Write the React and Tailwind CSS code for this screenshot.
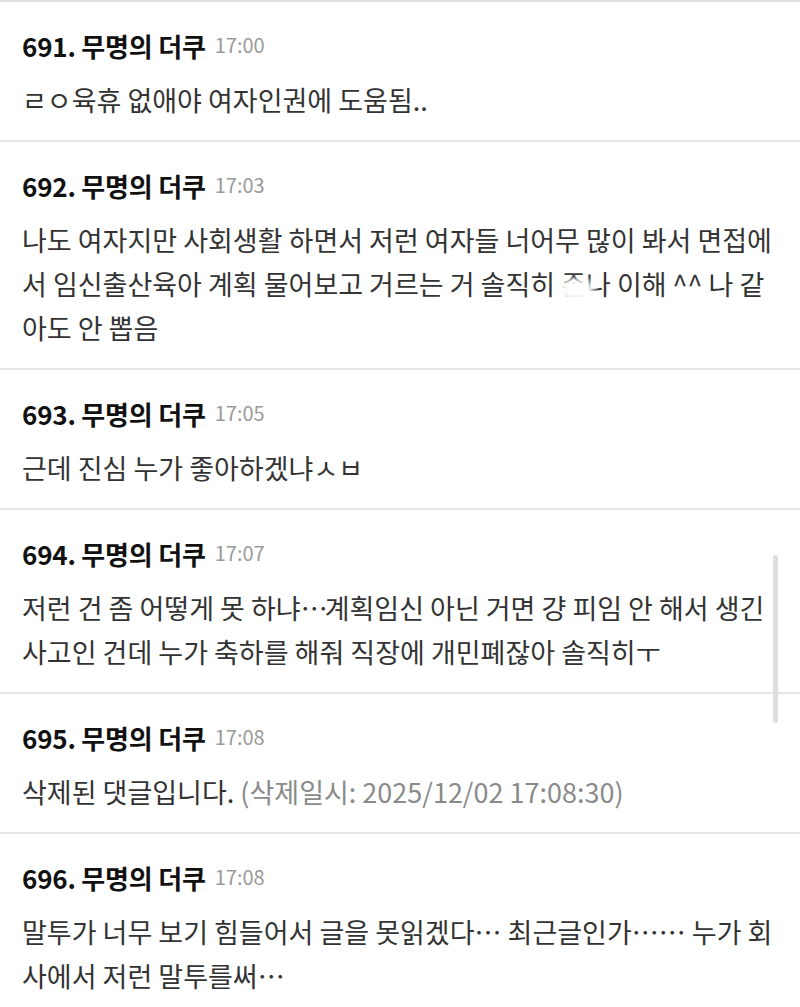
const Censored = ({ children }) => (
  <span className="relative inline-block">
    {children}
    <span className="absolute left-[-2px] top-[17px] h-[22px] w-[35px] rounded-full bg-white blur-[3px]" />
  </span>
)

const comments = [
  { no: 691, time: '17:00', lines: ['ㄹㅇ육휴 없애야 여자인권에 도움됨..'] },
  {
    no: 692,
    time: '17:03',
    lines: [
      '나도 여자지만 사회생활 하면서 저런 여자들 너어무 많이 봐서 면접에',
      <>
        서 임신출산육아 계획 물어보고 거르는 거 솔직히 <Censored>존나</Censored> 이해 ^^ 나 같
      </>,
      '아도 안 뽑음',
    ],
  },
  { no: 693, time: '17:05', lines: ['근데 진심 누가 좋아하겠냐ㅅㅂ'] },
  {
    no: 694,
    time: '17:07',
    lines: [
      <>
        저런 건 좀 어떻게 못 하냐<span className="tracking-[-3px]">…</span>계획임신 아닌 거면 걍 피임 안 해서 생긴
      </>,
      '사고인 건데 누가 축하를 해줘 직장에 개민폐잖아 솔직히ㅜ',
    ],
  },
  {
    no: 695,
    time: '17:08',
    lines: [
      <>
        삭제된 댓글입니다. <span className="text-[#8a8a8a]">(삭제일시: 2025/12/02 17:08:30)</span>
      </>,
    ],
  },
  {
    no: 696,
    time: '17:08',
    lines: ['말투가 너무 보기 힘들어서 글을 못읽겠다… 최근글인가…… 누가 회', '사에서 저런 말투를써…'],
  },
]

const CommentRow = ({ no, time, lines }) => (
  <div className="border-b-2 border-[#e6e6e6] px-[22px] pt-[25px] pb-[18px]">
    <div className="flex h-[36px] items-center gap-[9px]">
      <span className="text-[26px] font-bold tracking-[-0.2px] text-[#111]">{no}. 무명의 더쿠</span>
      <span className="text-[20px] text-[#9a9a9a]">{time}</span>
    </div>
    <p className="mt-[15px] text-[27px] leading-[44px] text-[#333]">
      {lines.map((line, i) => (
        <span key={i} className="block whitespace-nowrap">
          {line}
        </span>
      ))}
    </p>
  </div>
)

export default function App() {
  return (
    <div
      className="relative h-[1007px] w-[800px] overflow-hidden border-t-2 border-[#e0e0e0] bg-white"
      style={{ fontFamily: '"Noto Sans CJK KR", "Noto Sans", sans-serif' }}
    >
      {comments.map((c) => (
        <CommentRow key={c.no} {...c} />
      ))}
      <div className="absolute right-[22px] top-[553px] h-[168px] w-[5px] rounded-full bg-[#dedede]" />
    </div>
  )
}
